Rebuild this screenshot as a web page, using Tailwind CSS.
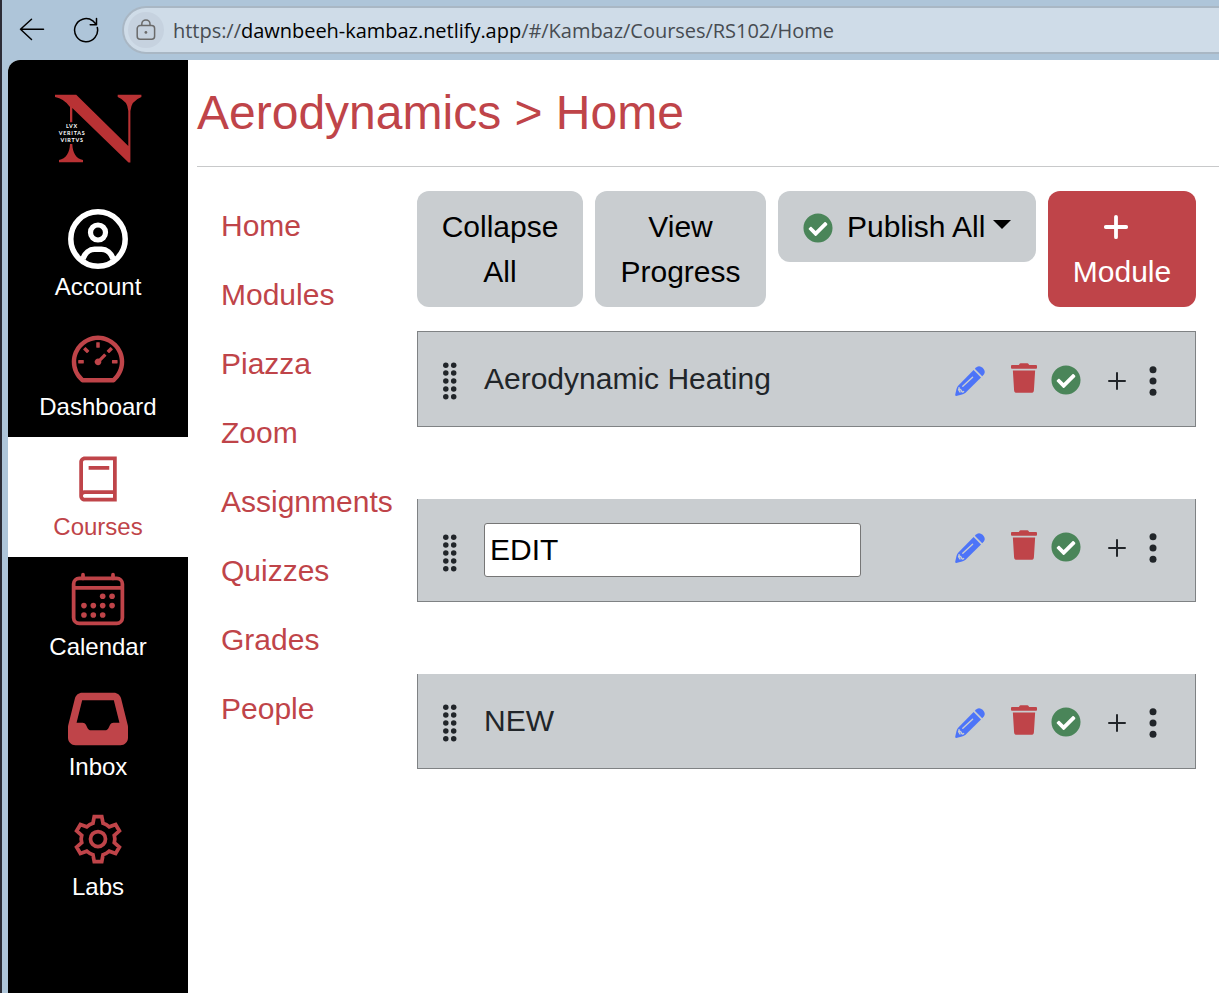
<!DOCTYPE html>
<html lang="en">
<head>
<meta charset="utf-8">
<title>Kambaz</title>
<script src="https://cdn.jsdelivr.net/npm/@tailwindcss/browser@4"></script>
</head>
<body class="h-[993px] overflow-hidden bg-[#aec5d9] font-['Liberation_Sans',Arial,sans-serif]">
<!-- shared icons -->
<svg class="hidden">
  <symbol id="grip" viewBox="0 0 16 40"><g fill="#212529"><circle cx="3.800" cy="4.2" r="2.75"/><circle cx="11.700" cy="4.2" r="2.75"/><circle cx="3.800" cy="12.1" r="2.75"/><circle cx="11.700" cy="12.1" r="2.75"/><circle cx="3.800" cy="20" r="2.75"/><circle cx="11.700" cy="20" r="2.75"/><circle cx="3.800" cy="27.9" r="2.75"/><circle cx="11.700" cy="27.9" r="2.75"/><circle cx="3.800" cy="35.8" r="2.75"/><circle cx="11.700" cy="35.8" r="2.75"/></g></symbol>
  <symbol id="pencil" viewBox="0 0 30 30"><g fill="#4d74f8"><path d="M18.600 4L26 11.400L10.800 26.400Q9 28 7 28.500L1.200 29.900Q0 30 .200 28.800L1.500 23Q2 21 3.600 19.200Z"/><path d="M19.800 2.800L21.500 1.200Q24.500-1 27.600 1.800L28.600 2.900Q30.800 6 28.800 8.600L27.200 10.200Z"/></g><path d="M7.800 20.300L17.600 11.200M4 21.700Q3.600 22.900 5.200 23.400Q6.300 23.900 6.500 25.200Q7.200 26.500 8.600 25.600M3.600 23.600L5 26" fill="none" stroke="#c9cdd0" stroke-width="1.400" stroke-linecap="round"/></symbol>
  <symbol id="trash" viewBox="0 0 448 512"><path fill="#bf4449" d="M432 32H312l-9.4-18.7A24 24 0 0 0 281.1 0H166.8a23.72 23.72 0 0 0-21.4 13.3L136 32H16A16 16 0 0 0 0 48v32a16 16 0 0 0 16 16h416a16 16 0 0 0 16-16V48a16 16 0 0 0-16-16zM53.2 467a48 48 0 0 0 47.9 45h245.8a48 48 0 0 0 47.9-45L416 128H32z"/></symbol>
  <symbol id="check" viewBox="0 0 512 512"><circle cx="256" cy="256" r="220" fill="#fff"/><path fill="#4a8559" d="M504 256c0 136.967-111.033 248-248 248S8 392.967 8 256 119.033 8 256 8s248 111.033 248 248zM227.314 387.314l184-184c6.248-6.248 6.248-16.379 0-22.627l-22.627-22.627c-6.248-6.249-16.379-6.249-22.628 0L216 308.118l-70.059-70.059c-6.248-6.248-16.379-6.248-22.628 0l-22.627 22.627c-6.248 6.248-6.248 16.379 0 22.627l104 104c6.249 6.249 16.379 6.249 22.628.001z"/></symbol>
  <symbol id="plus" viewBox="0 0 18 18"><path d="M9 1V17M1 9H17" fill="none" stroke="#212529" stroke-width="2" stroke-linecap="round"/></symbol>
  <symbol id="dots" viewBox="0 0 8 32"><g fill="#212529"><circle cx="4" cy="4.75" r="3.5"/><circle cx="4" cy="16" r="3.5"/><circle cx="4" cy="27.25" r="3.5"/></g></symbol>
</svg>

<div class="flex h-full border-l-2 border-[#2c2c36]">
<div class="flex min-w-0 flex-1 flex-col">
  <!-- browser toolbar -->
  <header class="flex h-[60px] shrink-0 items-center">
    <svg class="ml-[17px] size-[26px]" viewBox="0 0 26 26" fill="none" stroke="#000" stroke-width="1.5" stroke-linecap="round" stroke-linejoin="round"><path d="M24.5 12.300H1.5M12.5 2.2L1.5 12.300L12.5 22.500"/></svg>
    <svg class="ml-[28px] size-[26px]" viewBox="0 0 26 26" fill="none" stroke="#000" stroke-width="1.5" stroke-linecap="round" stroke-linejoin="round"><path d="M24.300 10.500A11.500 11.500 0 1 1 19.800 3.800L23.300 7.600M23.500 1.600V7.700H17.200"/></svg>
    <div class="ml-[23px] flex h-[48px] min-w-0 flex-1 items-center rounded-l-full border-2 border-r-0 border-[#a9b7c4] bg-[#cfdce8] pl-[4px]">
      <span class="flex size-[36px] items-center justify-center rounded-full bg-[#c6d2df]">
        <svg class="h-[22px] w-[20px]" viewBox="0 0 20 22" fill="none" stroke="#6a6a6a" stroke-width="1.5"><rect x="1.2" y="6.600" width="17.4" height="13.6" rx="3"/><path d="M5.8 6.600V5A4 4 0 0 1 14 5V6.600"/><circle cx="9.9" cy="13.400" r="1.4" fill="#6a6a6a" stroke="none"/></svg>
      </span>
      <span class="ml-[9px] mt-[2px] whitespace-nowrap font-['Open_Sans','Noto_Sans',sans-serif] text-[20px] leading-[28px] tracking-[-0.03px] text-[#474c52]"><span>https://</span><span class="text-black">dawnbeeh-kambaz.netlify.app</span><span>/#/Kambaz/Courses/RS102/Home</span></span>
    </div>
  </header>

  <div class="ml-[6px] flex min-h-0 flex-1 overflow-hidden rounded-tl-[12px] bg-white">
    <!-- main navigation -->
    <nav class="flex w-[180px] shrink-0 flex-col items-stretch bg-black text-center text-[24px] leading-[36px] text-white">
      <svg class="mx-auto h-[137px] w-[90px] shrink-0" viewBox="53 60 90 137">
        <g fill="#b93234">
          <path d="M55 94.7H76.2L128.300 146V111Q127.800 101 117.700 97V94.700H141.400V97Q131 101 130.400 111V162.500H128.500L72.300 108V122.300H70V107Q64 98.500 55 97Z"/>
          <path d="M70 144H72.300C72.600 153 76 158.500 83 160V162.200H59V160C66 158.500 69.700 153 70 144Z"/>
        </g>
        <g fill="#fff" font-family="Lato, sans-serif" font-weight="700" font-size="5.4" text-anchor="middle"><text x="71.500" y="128" textLength="11">LVX</text><text x="71.700" y="135.200" textLength="26">VERITAS</text><text x="71.700" y="141.700" textLength="22.500">VIRTVS</text></g>
      </svg>
      <a class="flex h-[120px] flex-col items-center py-3">
        <svg class="size-[60px]" viewBox="0 0 60 60" fill="none" stroke="#fff" stroke-width="5.5"><circle cx="30" cy="30" r="27.200"/><circle cx="30" cy="23.500" r="7.500" stroke-width="5.200"/><path d="M14.800 50C17 44 21.500 40.200 26.500 40.200H33.500C38.500 40.200 43 44 45.200 50"/></svg>
        <span>Account</span>
      </a>
      <a class="flex h-[120px] flex-col items-center py-3">
        <svg class="size-[60px]" viewBox="0 0 1024 1024" fill="#bf4449"><path d="M924.800 385.600a446.700 446.700 0 0 0-96-142.400 446.700 446.700 0 0 0-142.400-96C631.100 123.800 572.500 112 512 112s-119.100 11.800-174.400 35.200a446.700 446.700 0 0 0-142.400 96 446.700 446.700 0 0 0-96 142.400C75.800 440.900 64 499.500 64 560c0 132.700 58.300 257.700 159.900 343.100l1.700 1.400c5.800 4.800 13.100 7.500 20.600 7.500h531.700c7.500 0 14.800-2.700 20.600-7.500l1.700-1.400C901.700 817.700 960 692.700 960 560c0-60.500-11.900-119.100-35.200-174.400zM761.400 836H262.600A371.120 371.120 0 0 1 140 560c0-99.400 38.700-192.800 109-263 70.300-70.300 163.700-109 263-109 99.400 0 192.800 38.700 263 109 70.300 70.300 109 163.700 109 263 0 105.600-44.500 205.500-122.600 276zM623.500 421.500a8.030 8.030 0 0 0-11.300 0L527.700 506c-18.700-5-39.400-.2-54.100 14.500a55.950 55.950 0 0 0 0 79.200 55.950 55.950 0 0 0 79.200 0 55.870 55.870 0 0 0 14.500-54.100l84.500-84.500c3.100-3.100 3.100-8.200 0-11.300l-28.300-28.300zM490 320h44c4.400 0 8-3.600 8-8v-80c0-4.400-3.600-8-8-8h-44c-4.400 0-8 3.600-8 8v80c0 4.400 3.600 8 8 8zm260 218v44c0 4.400 3.600 8 8 8h80c4.400 0 8-3.600 8-8v-44c0-4.400-3.600-8-8-8h-80c-4.400 0-8 3.600-8 8zm12.700-197.200l-31.100-31.100a8.030 8.030 0 0 0-11.300 0l-56.600 56.600a8.030 8.030 0 0 0 0 11.300l31.100 31.100c3.100 3.100 8.200 3.100 11.300 0l56.600-56.600c3.100-3.100 3.100-8.200 0-11.300zm-458.600-31.100a8.030 8.030 0 0 0-11.300 0l-31.100 31.100a8.030 8.030 0 0 0 0 11.300l56.600 56.600c3.100 3.100 8.200 3.100 11.300 0l31.100-31.100c3.100-3.100 3.100-8.200 0-11.300l-56.600-56.600zM262 530h-80c-4.400 0-8 3.600-8 8v44c0 4.400 3.600 8 8 8h80c4.400 0 8-3.600 8-8v-44c0-4.400-3.600-8-8-8z"/></svg>
        <span>Dashboard</span>
      </a>
      <a class="flex h-[120px] flex-col items-center bg-white py-3 text-[#bf4449]">
        <svg class="size-[60px]" viewBox="0 0 32 32" fill="#bf4449" fill-rule="evenodd"><path d="M9 4C7.355 4 6 5.355 6 7V25C6 26.645 7.355 28 9 28H26V4H9ZM9 6H24V22H9C8.648 22 8.316 22.074 8 22.188V7C8 6.434 8.434 6 9 6ZM11 9V11H22V9H11ZM9 24H24V26H9C8.434 26 8 25.566 8 25S8.434 24 9 24Z"/></svg>
        <span>Courses</span>
      </a>
      <a class="flex h-[120px] flex-col items-center py-3">
        <svg class="size-[60px]" viewBox="0 0 512 512" fill="none" stroke="#bf4449" stroke-width="32"><rect x="48" y="80" width="416" height="384" rx="48"/><path d="M128 48V80M384 48V80" stroke-linecap="round"/><path d="M464 160H48"/><g fill="#bf4449" stroke="none"><circle cx="296" cy="232" r="24"/><circle cx="376" cy="232" r="24"/><circle cx="296" cy="312" r="24"/><circle cx="376" cy="312" r="24"/><circle cx="136" cy="312" r="24"/><circle cx="216" cy="312" r="24"/><circle cx="136" cy="392" r="24"/><circle cx="216" cy="392" r="24"/><circle cx="296" cy="392" r="24"/></g></svg>
        <span>Calendar</span>
      </a>
      <a class="flex h-[120px] flex-col items-center py-3">
        <svg class="size-[60px]" viewBox="0 0 512 512" fill="#bf4449"><path d="M121 32C91.600 32 66 52 58.900 80.500L1.900 308.400C.6 313.500 0 318.700 0 323.900V416c0 35.300 28.700 64 64 64H448c35.300 0 64-28.700 64-64V323.900c0-5.200-.6-10.400-1.900-15.500l-57-227.900C446 52 420.400 32 391 32H121zm0 64H391l48 192H387.800c-12.100 0-23.200 6.800-28.600 17.700l-14.300 28.600c-5.400 10.800-16.500 17.700-28.600 17.700H195.800c-12.100 0-23.200-6.800-28.600-17.700l-14.300-28.600c-5.400-10.800-16.500-17.700-28.600-17.700H73L121 96z"/></svg>
        <span>Inbox</span>
      </a>
      <a class="flex h-[120px] flex-col items-center py-3">
        <svg class="size-[60px]" viewBox="0 0 32 32" fill="none" stroke="#bf4449" stroke-width="2"><path d="M14 4H18L18.700 7.600C20 8 21.100 8.700 22 9.500L25.400 8.300L27.400 11.700L24.700 14.100C25.100 15.400 25.100 16.600 24.700 17.900L27.400 20.300L25.400 23.700L22 22.500C21.100 23.300 20 24 18.700 24.400L18 28H14L13.300 24.400C12 24 10.900 23.300 10 22.500L6.600 23.700L4.600 20.300L7.300 17.900C6.900 16.600 6.900 15.400 7.300 14.100L4.600 11.700L6.600 8.300L10 9.500C10.900 8.700 12 8 13.300 7.600Z"/><circle cx="16" cy="16" r="4"/></svg>
        <span>Labs</span>
      </a>
    </nav>

    <main class="flex min-w-0 flex-1 flex-col pl-[9px] text-[30px] leading-[45px]">
      <h1 class="flex h-[106px] items-center text-[48px] leading-[58px] text-[#bf4449]">Aerodynamics &gt; Home</h1>
      <hr class="border-t border-[#c8c9ca]">
      <div class="flex items-start pt-[24px]">
        <!-- course navigation -->
        <nav class="flex w-[220px] shrink-0 flex-col pl-[24px] text-[#bf4449]">
          <a class="py-3">Home</a><a class="py-3">Modules</a><a class="py-3">Piazza</a><a class="py-3">Zoom</a><a class="py-3">Assignments</a><a class="py-3">Quizzes</a><a class="py-3">Grades</a><a class="py-3">People</a>
        </nav>

        <section class="w-[779px] shrink-0 text-[#212529]">
          <div class="flex items-start gap-3">
            <button class="h-[116px] w-[166px] rounded-[12px] bg-[#c9cdd0] text-black">Collapse<br>All</button>
            <button class="h-[116px] w-[171px] rounded-[12px] bg-[#c9cdd0] text-black">View<br>Progress</button>
            <button class="flex h-[71px] w-[258px] items-center rounded-[12px] bg-[#c9cdd0] pl-[25px] text-black"><svg class="mt-[2px] size-[30px]"><use href="#check"/></svg><span class="ml-[14px]">Publish All</span><span class="mb-[5px] ml-[8px] border-x-[9px] border-t-[9px] border-x-transparent border-t-black"></span></button>
            <button class="flex h-[116px] w-[148px] flex-col items-center rounded-[12px] bg-[#bf4449] pt-[13px] text-white"><span class="flex h-[45px] items-center pr-[12px]"><svg class="size-[26px]" viewBox="0 0 26 26" fill="none" stroke="#fff" stroke-width="3.800" stroke-linecap="round"><path d="M13 2.800V23.200M2.800 13H23.200"/></svg></span><span>Module</span></button>
          </div>

          <ul class="mt-[24px]">
            <li class="flex h-[96px] items-start border border-[#7f8284] bg-[#c9cdd0] pl-[24px]">
              <svg class="mt-[29px] h-[40px] w-[16px]"><use href="#grip"/></svg>
              <span class="ml-[26px] mt-[24px] flex-1">Aerodynamic Heating</span>
              <span class="mt-[29px] flex h-[40px] w-[203px] items-center"><svg class="size-[30px]"><use href="#pencil"/></svg><svg class="mb-[7px] ml-[26px] h-[30px] w-[26px]"><use href="#trash"/></svg><svg class="mb-[2px] ml-[14px] size-[30px]"><use href="#check"/></svg><svg class="ml-[27px] size-[18px]"><use href="#plus"/></svg><svg class="ml-[23px] h-[32px] w-[8px]"><use href="#dots"/></svg></span><span class="w-[37px]"></span>
            </li>
            <li class="mt-[72px] flex h-[103px] items-start border border-t-0 border-[#7f8284] bg-[#c9cdd0] pl-[24px]">
              <svg class="mt-[34px] h-[40px] w-[16px]"><use href="#grip"/></svg>
              <input class="ml-[26px] mt-[24px] h-[54px] w-[377px] rounded-[3px] border border-[#767676] bg-white px-[5px] text-black" value="EDIT"><span class="flex-1"></span>
              <span class="mt-[29px] flex h-[40px] w-[203px] items-center"><svg class="size-[30px]"><use href="#pencil"/></svg><svg class="mb-[7px] ml-[26px] h-[30px] w-[26px]"><use href="#trash"/></svg><svg class="mb-[2px] ml-[14px] size-[30px]"><use href="#check"/></svg><svg class="ml-[27px] size-[18px]"><use href="#plus"/></svg><svg class="ml-[23px] h-[32px] w-[8px]"><use href="#dots"/></svg></span><span class="w-[37px]"></span>
            </li>
            <li class="mt-[72px] flex h-[95px] items-start border border-t-0 border-[#7f8284] bg-[#c9cdd0] pl-[24px]">
              <svg class="mt-[29px] h-[40px] w-[16px]"><use href="#grip"/></svg>
              <span class="ml-[26px] mt-[24px] flex-1">NEW</span>
              <span class="mt-[29px] flex h-[40px] w-[203px] items-center"><svg class="size-[30px]"><use href="#pencil"/></svg><svg class="mb-[7px] ml-[26px] h-[30px] w-[26px]"><use href="#trash"/></svg><svg class="mb-[2px] ml-[14px] size-[30px]"><use href="#check"/></svg><svg class="ml-[27px] size-[18px]"><use href="#plus"/></svg><svg class="ml-[23px] h-[32px] w-[8px]"><use href="#dots"/></svg></span><span class="w-[37px]"></span>
            </li>
          </ul>
        </section>
      </div>
    </main>
  </div>
</div>
</div>
</body>
</html>
